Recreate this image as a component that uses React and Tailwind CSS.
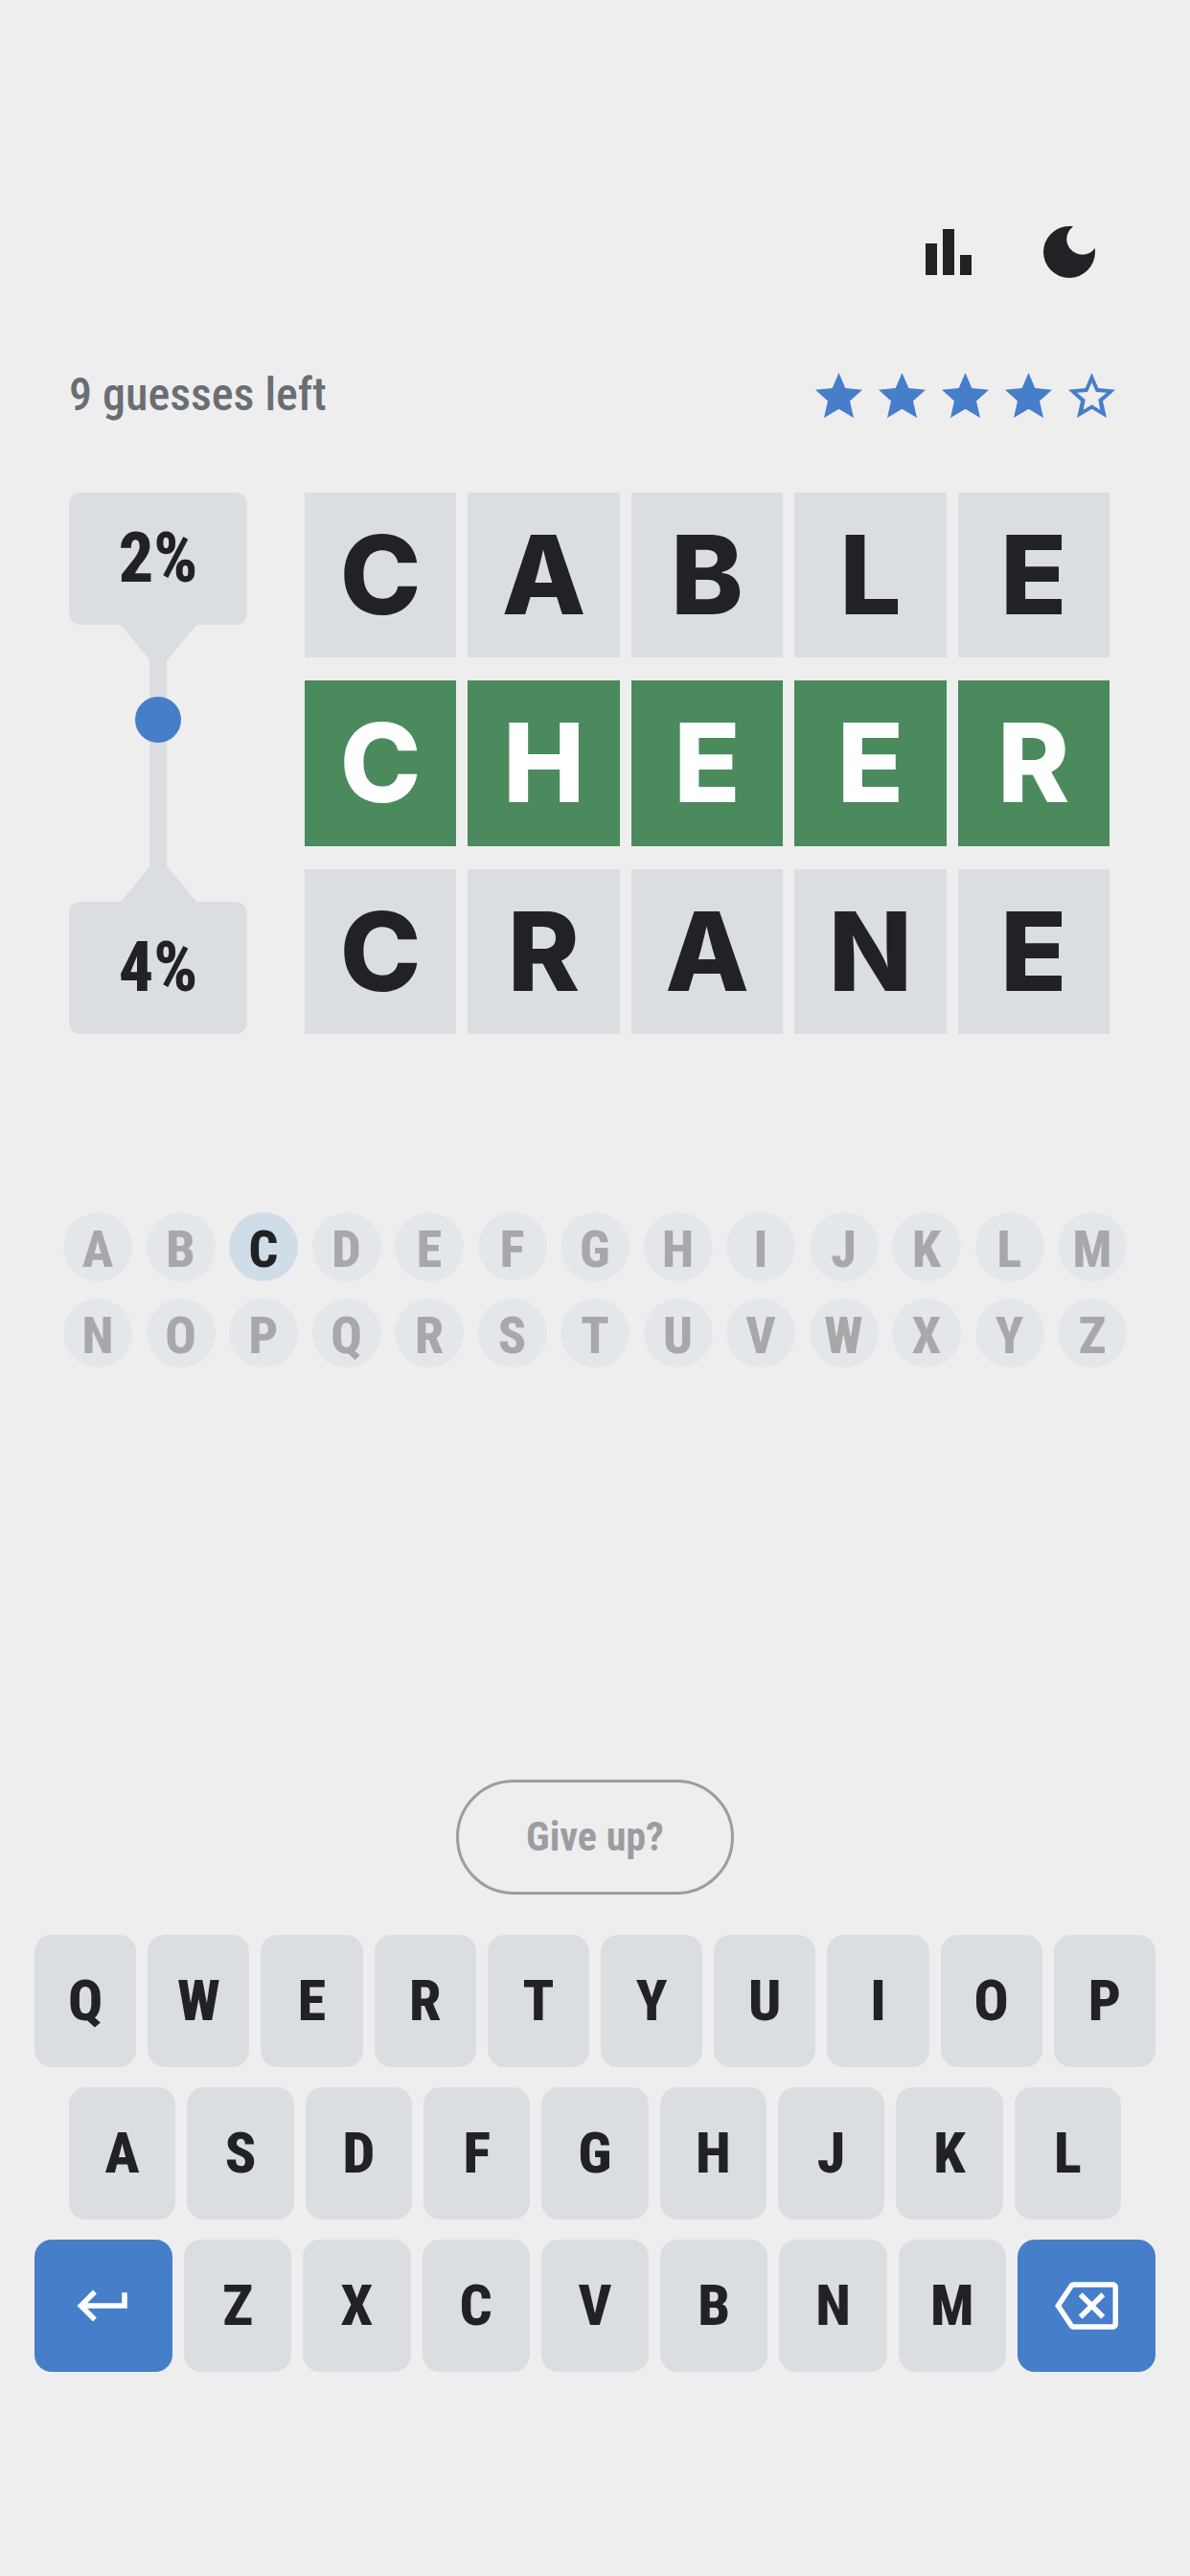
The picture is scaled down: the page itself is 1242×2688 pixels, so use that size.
// src/App.jsx
import clsx from 'clsx';
import { MdDarkMode, MdKeyboardReturn, MdOutlineBackspace } from 'react-icons/md';

const WORDS = [
  { word: 'CABLE', active: false },
  { word: 'CHEER', active: true },
  { word: 'CRANE', active: false },
];

const ALPHABET = 'ABCDEFGHIJKLMNOPQRSTUVWXYZ'.split('');
const USED_LETTERS = ['C'];

const STAR = 'M24.5 0 31.3 16 49 17.7 36 29.5 40 47 24.5 37.7 9 47 13 29.5 0 17.7 17.7 16Z';
const STAR_HOLE = 'M24.5 10 20 20 9 20.8 17.7 28 15.7 38.8 24.5 33.3 33.3 38.8 31.3 28 40 20.8 29 20Z';

function Header() {
  return (
    <header className="flex justify-end gap-[54px] pr-[90px] text-[#212226]">
      <button type="button" aria-label="Statistics">
        <svg viewBox="0 0 24 24" fill="currentColor" className="size-[72px]">
          <path d="M4 9h4v11H4zM10 4h4v16h-4zM16 13h4v7h-4z" />
        </svg>
      </button>
      <button type="button" aria-label="Dark mode">
        <MdDarkMode className="size-[72px]" />
      </button>
    </header>
  );
}

function Star({ filled }) {
  return (
    <svg viewBox="0 0 49 47" fill="currentColor" fillRule="evenodd" className="h-[47px] w-[49px]">
      <path d={filled ? STAR : STAR + STAR_HOLE} />
    </svg>
  );
}

function Status({ guesses, rating }) {
  return (
    <div className="mt-[77px] flex h-[72px] items-center justify-between pr-[78px] pl-[72px]">
      <p className="text-[48px] font-medium text-[#696e74]">{guesses} guesses left</p>
      <div className="flex gap-[17px] text-[#467ec9]">
        {[1, 2, 3, 4, 5].map(n => (
          <Star key={n} filled={n <= rating} />
        ))}
      </div>
    </div>
  );
}

// Shows how far the answer sits from the top and the bottom word
function Range({ top, bottom }) {
  return (
    <div className="relative flex w-[186px] flex-col items-center text-[72px] leading-none font-extrabold text-[#212226]">
      <div className="flex h-[138px] w-full items-center justify-center rounded-xl bg-[#dadde2]">{top}%</div>
      <svg viewBox="0 0 79 37" className="h-[37px] w-[79px] fill-[#dadde2]">
        <path d="M0 0H79L48.5 37h-18Z" />
      </svg>
      <div className="w-[18px] grow bg-[#dadde2]" />
      <svg viewBox="0 0 79 37" className="h-[37px] w-[79px] fill-[#dadde2]">
        <path d="M0 37H79L48.5 0h-18Z" />
      </svg>
      <div className="flex h-[138px] w-full items-center justify-center rounded-xl bg-[#dadde2]">{bottom}%</div>
      <span className="absolute top-[42%] size-12 -translate-y-1/2 rounded-full bg-[#467ec9]" />
    </div>
  );
}

function Board() {
  return (
    <div className="mt-[66px] flex gap-[60px] pr-[84px] pl-[72px]">
      <Range top={2} bottom={4} />
      <div className="grid h-[565px] grow grid-rows-3 gap-6">
        {WORDS.map(({ word, active }) => (
          <div key={word} className="grid grid-cols-5 gap-3">
            {word.split('').map((letter, i) => (
              <div
                key={i}
                className={clsx(
                  "flex items-center justify-center font-['Inter',sans-serif] text-[114px] leading-none font-extrabold",
                  active ? 'bg-[#4a8a5c] text-white' : 'bg-[#dadde2] text-[#212226]'
                )}
              >
                {letter}
              </div>
            ))}
          </div>
        ))}
      </div>
    </div>
  );
}

function LetterRow({ letters }) {
  return (
    <div className="flex justify-between">
      {letters.map(letter => (
        <span
          key={letter}
          className={clsx(
            'flex size-[72px] items-center justify-center rounded-full pt-1.5 text-[54px] leading-none font-extrabold',
            USED_LETTERS.includes(letter) ? 'bg-[#d1dce9] text-[#212226]' : 'bg-[#e3e7ec] text-[#a8a8aa]'
          )}
        >
          {letter}
        </span>
      ))}
    </div>
  );
}

function Key({ letter }) {
  return (
    <button
      type="button"
      className="h-[138px] flex-1 rounded-[18px] bg-[#dadde2] text-[60px] leading-none font-extrabold text-[#212226]"
    >
      {letter}
    </button>
  );
}

function ActionKey({ label, icon: Icon }) {
  return (
    <button
      type="button"
      aria-label={label}
      className="flex h-[138px] w-36 items-center justify-center rounded-[18px] bg-[#467ec9] text-white"
    >
      <Icon className="size-[66px]" />
    </button>
  );
}

function Keyboard() {
  return (
    <div className="mt-[42px] flex flex-col gap-[21px] px-9">
      <div className="flex gap-3">
        {'QWERTYUIOP'.split('').map(l => <Key key={l} letter={l} />)}
      </div>
      <div className="flex gap-3 px-9">
        {'ASDFGHJKL'.split('').map(l => <Key key={l} letter={l} />)}
      </div>
      <div className="flex gap-3">
        <ActionKey label="Enter" icon={MdKeyboardReturn} />
        {'ZXCVBNM'.split('').map(l => <Key key={l} letter={l} />)}
        <ActionKey label="Backspace" icon={MdOutlineBackspace} />
      </div>
    </div>
  );
}

export default function App() {
  return (
    <main className="flex min-h-screen flex-col bg-[#eeeeee] pt-[227px] pb-[213px] font-['Roboto_Condensed','Roboto',sans-serif]">
      <Header />
      <Status guesses={9} rating={4} />
      <Board />
      <div className="mt-[186px] flex flex-col gap-[18px] px-[66px]">
        <LetterRow letters={ALPHABET.slice(0, 13)} />
        <LetterRow letters={ALPHABET.slice(13)} />
      </div>
      <div className="mt-auto flex flex-col">
        <button
          type="button"
          className="h-[120px] w-[290px] self-center rounded-full border-3 border-[#9a9da1] text-[42px] leading-none font-bold text-[#9a9da1]"
        >
          Give up?
        </button>
        <Keyboard />
      </div>
    </main>
  );
}
